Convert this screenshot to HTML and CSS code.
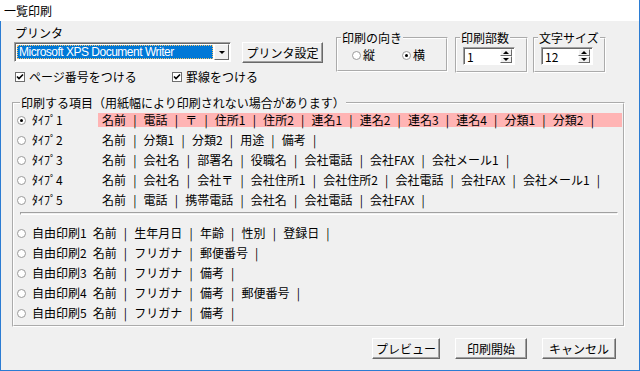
FILE: index.html
```html
<!DOCTYPE html>
<html lang="ja">
<head>
    <meta charset="UTF-8">
    <meta name="viewport" content="width=device-width, initial-scale=1.0">
    <title>一覧印刷</title>
    <link rel="stylesheet" href="styles.css">
</head>
<body>

    <div class="window">
        <div class="titlebar">一覧印刷</div>

        <div class="dialog">
            <div class="top">
                <div class="printer">
                    <div class="printer-label">プリンタ</div>
                    <div class="printer-row">
                        <div class="combo">
                            <div class="combo-value"><span class="combo-text">Microsoft XPS Document Writer</span></div>
                            <div class="combo-button"><span class="arrow-down"></span></div>
                        </div>
                        <button class="btn btn-setup">プリンタ設定</button>
                    </div>
                    <div class="checks">
                        <label class="check check-page">
                            <span class="box"><svg viewBox="0 0 8 8" class="tick"><path d="M1 3.5 L3 5.5 L7 1.5" /></svg></span>ページ番号をつける
                        </label>
                        <label class="check">
                            <span class="box"><svg viewBox="0 0 8 8" class="tick"><path d="M1 3.5 L3 5.5 L7 1.5" /></svg></span>罫線をつける
                        </label>
                    </div>
                </div>

                <fieldset class="group group-orient">
                    <legend>印刷の向き</legend>
                    <div class="orient-row">
                        <span class="option"><span class="radio"></span>縦</span>
                        <span class="option"><span class="radio on"></span>横</span>
                    </div>
                </fieldset>

                <fieldset class="group group-spin">
                    <legend>印刷部数</legend>
                    <div class="spin">
                        <span class="spin-value">1</span>
                        <span class="spin-buttons"><span class="spin-up"></span><span class="spin-down"></span></span>
                    </div>
                </fieldset>

                <fieldset class="group group-spin group-size">
                    <legend>文字サイズ</legend>
                    <div class="spin">
                        <span class="spin-value">12</span>
                        <span class="spin-buttons"><span class="spin-up"></span><span class="spin-down"></span></span>
                    </div>
                </fieldset>
            </div>

            <fieldset class="group group-items">
                <legend>印刷する項目（用紙幅により印刷されない場合があります）</legend>
                <div class="item-row">
                    <span class="radio on"></span><span class="item-name">ﾀｲﾌﾟ1</span>
                    <span class="item-fields selected">名前 | 電話 | 〒 | 住所1 | 住所2 | 連名1 | 連名2 | 連名3 | 連名4 | 分類1 | 分類2 |</span>
                </div>
                <div class="item-row">
                    <span class="radio"></span><span class="item-name">ﾀｲﾌﾟ2</span>
                    <span class="item-fields">名前 | 分類1 | 分類2 | 用途 | 備考 |</span>
                </div>
                <div class="item-row">
                    <span class="radio"></span><span class="item-name">ﾀｲﾌﾟ3</span>
                    <span class="item-fields">名前 | 会社名 | 部署名 | 役職名 | 会社電話 | 会社FAX | 会社メール1 |</span>
                </div>
                <div class="item-row">
                    <span class="radio"></span><span class="item-name">ﾀｲﾌﾟ4</span>
                    <span class="item-fields">名前 | 会社名 | 会社〒 | 会社住所1 | 会社住所2 | 会社電話 | 会社FAX | 会社メール1 |</span>
                </div>
                <div class="item-row">
                    <span class="radio"></span><span class="item-name">ﾀｲﾌﾟ5</span>
                    <span class="item-fields">名前 | 電話 | 携帯電話 | 会社名 | 会社電話 | 会社FAX |</span>
                </div>

                <div class="separator"></div>

                <div class="free-rows">
                    <div class="item-row free">
                        <span class="radio"></span><span class="item-name">自由印刷1</span>
                        <span class="item-fields">名前 | 生年月日 | 年齢 | 性別 | 登録日 |</span>
                    </div>
                    <div class="item-row free">
                        <span class="radio"></span><span class="item-name">自由印刷2</span>
                        <span class="item-fields">名前 | フリガナ | 郵便番号 |</span>
                    </div>
                    <div class="item-row free">
                        <span class="radio"></span><span class="item-name">自由印刷3</span>
                        <span class="item-fields">名前 | フリガナ | 備考 |</span>
                    </div>
                    <div class="item-row free">
                        <span class="radio"></span><span class="item-name">自由印刷4</span>
                        <span class="item-fields">名前 | フリガナ | 備考 | 郵便番号 |</span>
                    </div>
                    <div class="item-row free">
                        <span class="radio"></span><span class="item-name">自由印刷5</span>
                        <span class="item-fields">名前 | フリガナ | 備考 |</span>
                    </div>
                </div>
            </fieldset>

            <div class="actions">
                <button class="btn btn-preview">プレビュー</button>
                <button class="btn btn-print">印刷開始</button>
                <button class="btn btn-cancel">キャンセル</button>
            </div>
        </div>
    </div>

</body>
</html>
```

FILE: styles.css
```css
* {
    box-sizing: border-box;
}

body {
    margin: 0;
    font-family: "Noto Sans CJK JP", sans-serif;
    font-size: 12px;
    line-height: 14px;
    color: #000;
    background: #f0f0f0;
}

/* Window frame */
.window {
    width: 640px;
    height: 371px;
    border-right: 1px solid #2b7cd3;
    border-bottom: 1px solid #2b7cd3;
    display: flex;
    flex-direction: column;
}

.titlebar {
    height: 21px;
    padding: 4px 0 0 4px;
    background: #fff;
}

.dialog {
    flex: 1;
    border-left: 1px solid #2b7cd3;
    background: #f0f0f0;
    padding: 0 14px 0 11px;
    display: flex;
    flex-direction: column;
}

/* Top area */
.top {
    display: flex;
    align-items: flex-start;
}

.printer {
    width: 309px;
    margin-left: 2px;
    padding-top: 5px;
}

.printer-label {
    margin-left: 1px;
}

.printer-row {
    display: flex;
    align-items: flex-start;
    margin-top: 2px;
}

.combo {
    width: 217px;
    height: 20px;
    margin-right: 11px;
    display: flex;
    padding: 1px;
    background: #fff;
    border: 1px solid;
    border-color: #a0a0a0 #fff #fff #a0a0a0;
    box-shadow: inset 1px 1px 0 #696969;
}

.combo-value {
    flex: 1;
    padding: 1px 1px 0 1px;
}

.combo-text {
    display: block;
    height: 14px;
    padding-left: 2px;
    font-family: "Liberation Sans", "Noto Sans CJK JP", sans-serif;
    letter-spacing: -0.5px;
    color: #fff;
    background: #0078d7;
    outline: 1px dotted #f4c36c;
    outline-offset: -1px;
    white-space: nowrap;
    overflow: hidden;
}

.combo-button {
    width: 15px;
    display: flex;
    align-items: center;
    justify-content: center;
    background: #f0f0f0;
    border: 1px solid;
    border-color: #fff #696969 #696969 #fff;
}

.arrow-down {
    width: 0;
    height: 0;
    border-left: 3px solid transparent;
    border-right: 3px solid transparent;
    border-top: 3px solid #000;
}

.btn {
    font: inherit;
    line-height: 14px;
    color: #000;
    background: #f0f0f0;
    border: 1px solid;
    border-color: #fff #696969 #696969 #fff;
    box-shadow: inset -1px -1px 0 #a0a0a0;
    padding: 0;
    height: 21px;
}

.btn-setup {
    width: 81px;
}

.checks {
    display: flex;
    align-items: center;
    margin-top: 7px;
    height: 14px;
}

.check {
    display: flex;
    align-items: center;
}

.check-page {
    width: 157px;
}

.box {
    width: 10px;
    height: 10px;
    margin: 0 4px 0 1px;
    background: #fff;
    border: 1px solid #6e6e6e;
    display: flex;
}

.tick {
    width: 8px;
    height: 8px;
}

.tick path {
    fill: none;
    stroke: #000;
    stroke-width: 1.6;
}

/* Group boxes */
.group {
    margin: 0;
    min-width: 0;
    padding: 0 0 5px 0;
    border: 2px groove #fff;
}

.group legend {
    margin-left: 3px;
    padding: 0 1px;
    line-height: 14px;
}

.group-orient {
    width: 112px;
    margin: 10px 0 0 13px;
}

.orient-row {
    height: 20px;
    display: flex;
    align-items: center;
    padding-left: 14px;
}

.option {
    display: flex;
    align-items: center;
    margin-right: 27px;
}

.option .radio {
    margin-right: 2px;
}

.radio {
    width: 9px;
    height: 9px;
    flex: none;
    border-radius: 50%;
    border: 1px solid #9a9a9a;
    background: #fff;
    display: flex;
    align-items: center;
    justify-content: center;
}

.radio.on::after {
    content: "";
    width: 3px;
    height: 3px;
    border-radius: 50%;
    background: #000;
}

.group-spin {
    width: 73px;
    margin: 10px 0 0 7px;
}

.group-size {
    margin-left: 5px;
}

.spin {
    width: 52px;
    height: 18px;
    margin: 2px 0 1px 6px;
    display: flex;
    padding: 1px;
    background: #fff;
    border: 1px solid;
    border-color: #a0a0a0 #fff #fff #a0a0a0;
    box-shadow: inset 1px 1px 0 #696969;
}

.spin-value {
    flex: 1;
    padding: 1px 0 0 2px;
}

.spin-buttons {
    width: 12px;
    display: flex;
    flex-direction: column;
    margin-right: 1px;
}

.spin-up,
.spin-down {
    flex: 1;
    display: flex;
    align-items: center;
    justify-content: center;
    background: #f0f0f0;
    border: 1px solid;
    border-color: #fff #696969 #696969 #fff;
}

.spin-up::after {
    content: "";
    border-left: 3px solid transparent;
    border-right: 3px solid transparent;
    border-bottom: 3px solid #000;
}

.spin-down::after {
    content: "";
    border-left: 3px solid transparent;
    border-right: 3px solid transparent;
    border-top: 3px solid #000;
}

/* Items to print */
.group-items {
    margin-top: 12px;
    padding: 0 0 2px 3px;
}

.item-row {
    display: flex;
    align-items: center;
    height: 20px;
}

.item-row .radio {
    margin-right: 6px;
}

.item-name {
    width: 66px;
    flex: none;
}

.item-fields {
    flex: 1;
    padding-left: 4px;
    margin-right: 1px;
    white-space: pre;
    word-spacing: 4.5px;
}

.item-fields.selected {
    background: #ffb4b4;
}

.free .item-name {
    width: auto;
    margin-right: 2px;
}

.separator {
    height: 3px;
    margin: 2px 5px 0 3px;
    border: 1px solid;
    border-color: #a0a0a0 #fff #fff #a0a0a0;
}

.free-rows {
    margin-top: 8px;
}

/* Bottom buttons */
.actions {
    display: flex;
    justify-content: flex-end;
    gap: 15px;
    margin-top: 11px;
    padding-right: 9px;
}

.btn-preview {
    width: 68px;
}

.btn-print {
    width: 72px;
}

.btn-cancel {
    width: 74px;
}
```
